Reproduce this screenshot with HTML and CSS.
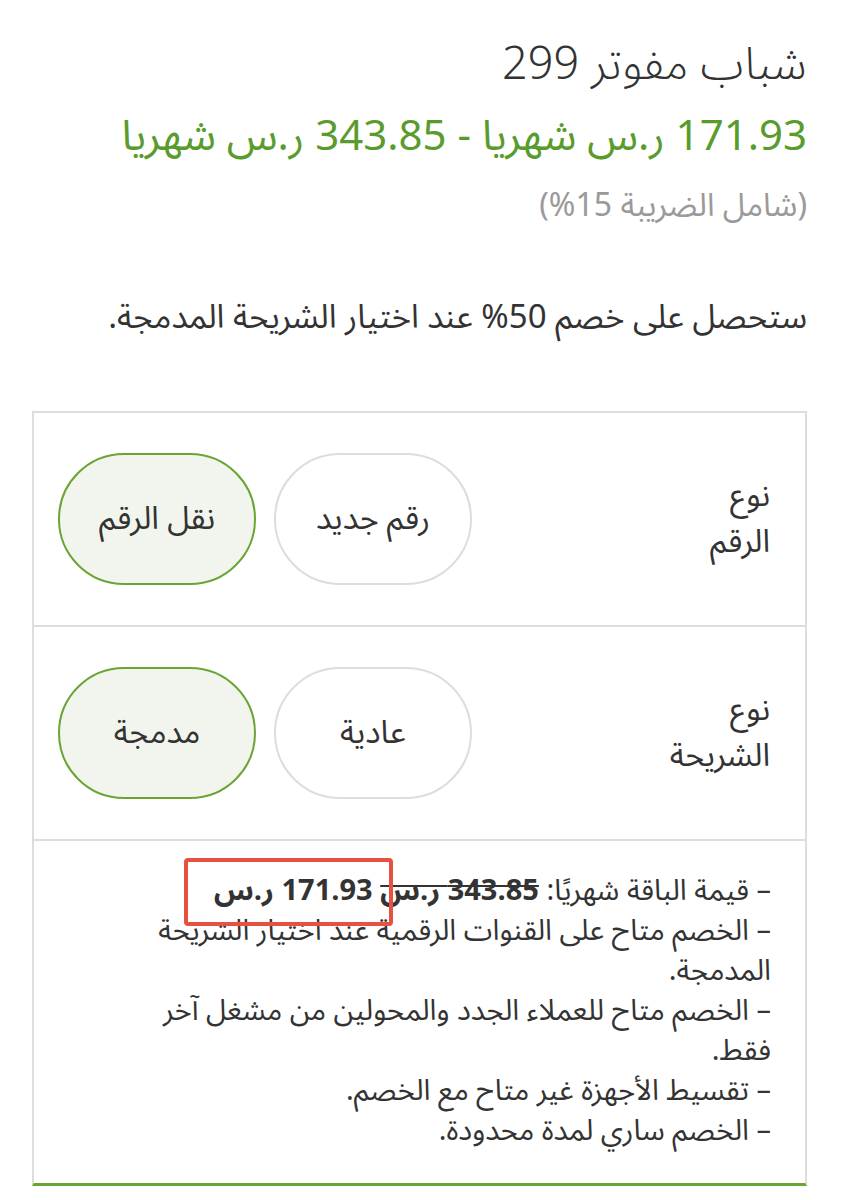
FILE: index.html
```html
<!DOCTYPE html>
<html lang="ar" dir="rtl">
<head>
<meta charset="utf-8">
<title>شباب مفوتر 299</title>
<link rel="stylesheet" href="styles.css">
</head>
<body>
<main class="page">
  <h1 class="title">شباب مفوتر 299</h1>
  <div class="price">171.93 ر.س شهريا - 343.85 ر.س شهريا</div>
  <div class="tax">(شامل الضريبة 15%)</div>
  <p class="note">ستحصل على خصم 50% عند اختيار الشريحة المدمجة.</p>

  <section class="options">
    <div class="row">
      <div class="label">نوع<br>الرقم</div>
      <div class="choices">
        <div class="choice">رقم جديد</div>
        <div class="choice selected">نقل الرقم</div>
      </div>
    </div>
    <div class="row">
      <div class="label">نوع<br>الشريحة</div>
      <div class="choices">
        <div class="choice">عادية</div>
        <div class="choice selected">مدمجة</div>
      </div>
    </div>
    <div class="details">
      <p class="line first">– قيمة الباقة شهريًا: <del class="old">343.85 ر.س</del> <span class="new">171.93 ر.س<span class="mark"></span></span></p>
      <p class="line">– الخصم متاح على القنوات الرقمية عند اختيار الشريحة المدمجة.</p>
      <p class="line">– الخصم متاح للعملاء الجدد والمحولين من مشغل آخر فقط.</p>
      <p class="line">– تقسيط الأجهزة غير متاح مع الخصم.</p>
      <p class="line">– الخصم ساري لمدة محدودة.</p>
    </div>
  </section>
</main>
</body>
</html>
```
FILE: styles.css
```css
html, body {
  margin: 0;
  padding: 0;
  background: #ffffff;
}
body {
  font-family: "Noto Sans Arabic", "DejaVu Sans", sans-serif;
  color: #333333;
}
.page {
  padding: 36px 34px 0 32px;
  display: flex;
  flex-direction: column;
}
.title {
  margin: 0;
  font-size: 45px;
  font-weight: 300;
  line-height: 58px;
  color: #333333;
}
.price {
  margin-top: 16px;
  font-size: 42px;
  line-height: 54px;
  color: #5a9b2e;
}
.tax {
  margin-top: 20px;
  font-size: 32px;
  line-height: 44px;
  color: #9a9a9a;
}
.note {
  margin: 66px 0 0;
  font-size: 33px;
  line-height: 48px;
  color: #333333;
}
.options {
  margin-top: 69px;
  border: 2px solid #dddddd;
  border-bottom: 3px solid #6aa534;
  display: flex;
  flex-direction: column;
}
.row {
  display: flex;
  align-items: center;
  padding: 40px 35px 40px 24px;
  border-bottom: 2px solid #dddddd;
}
.label {
  font-size: 32px;
  line-height: 46px;
}
.choices {
  margin-inline-start: auto;
  display: flex;
  gap: 18px;
}
.choice {
  width: 194px;
  height: 128px;
  box-sizing: content-box;
  border: 2px solid #dddddd;
  border-radius: 66px / 50%;
  background: #ffffff;
  display: flex;
  align-items: center;
  justify-content: center;
  font-size: 32px;
}
.choice.selected {
  border-color: #6aa534;
  background: #f2f5ee;
}
.details {
  padding: 30px 34px 32px 89px;
}
.line {
  margin: 0;
  font-size: 29px;
  line-height: 40px;
}
.old {
  font-weight: 700;
}
.new {
  font-weight: 700;
  position: relative;
}
.mark {
  position: absolute;
  left: -30px;
  right: -20px;
  top: -2px;
  bottom: -5px;
  border: 4px solid #e8503f;
  border-radius: 4px;
}
```
